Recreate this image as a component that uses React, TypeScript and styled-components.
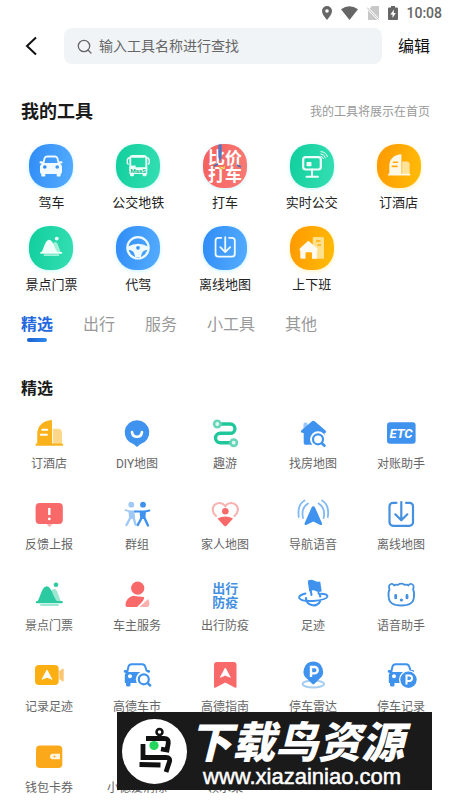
import React, { useState } from "react";
import styled, { createGlobalStyle } from "styled-components";

const GlobalStyle = createGlobalStyle`
  * { box-sizing: border-box; }
  body {
    margin: 0;
    background: #fff;
    color: #1a1a1a;
    font-family: Roboto, "Noto Sans CJK SC", sans-serif;
  }
  button, input { font: inherit; color: inherit; }
  button { border: 0; padding: 0; background: none; cursor: pointer; }
  svg { display: block; flex: none; }
`;

const Page = styled.div`
  position: relative;
  min-height: 100vh;
  overflow: hidden;
`;

const StatusBar = styled.div`
  display: flex;
  align-items: center;
  justify-content: flex-end;
  height: 28px;
  padding: 0 8px 3px 0;
  color: #666;
  font-size: 14px;
  font-weight: 500;
`;

const StatusIcons = styled.div`
  display: flex;
  align-items: center;
  gap: 9px;
  margin-right: 8px;
`;

const Header = styled.header`
  display: flex;
  align-items: center;
  height: 36px;
  padding: 0 20px;
`;

const BackButton = styled.button`
  display: flex;
  width: 44px;
  height: 36px;
  align-items: center;
  padding-left: 4px;
`;

const SearchBox = styled.label`
  display: flex;
  flex: 1;
  min-width: 0;
  height: 36px;
  align-items: center;
  gap: 7px;
  padding: 0 13px;
  border-radius: 8px;
  background: #f1f4f7;
  color: #555;
`;

const SearchInput = styled.input`
  flex: 1;
  min-width: 0;
  border: 0;
  padding: 0;
  outline: 0;
  background: transparent;
  font-size: 14px;
  &::placeholder { color: #666; opacity: 1; }
`;

const EditButton = styled.button`
  margin-left: 16px;
  padding-top: 1px;
  font-size: 16px;
  line-height: 24px;
  color: #111;
`;

const SectionHead = styled.div<{ $top: number; $bottom: number }>`
  display: flex;
  align-items: center;
  justify-content: space-between;
  padding: 0 20px 0 21px;
  margin: ${(p) => p.$top}px 0 ${(p) => p.$bottom}px;
`;

const Title = styled.h2<{ $size: number }>`
  margin: 0;
  font-size: ${(p) => p.$size}px;
  line-height: 24px;
  font-weight: 700;
`;

const Hint = styled.span`
  font-size: 12px;
  line-height: 16px;
  color: #999;
`;

const MyGrid = styled.div`
  display: grid;
  grid-template-columns: repeat(5, 1fr);
  row-gap: 14px;
  padding: 0 8px;
`;

const MyTool = styled.button`
  display: flex;
  flex-direction: column;
  align-items: center;
  gap: 6px;
  font-size: 13px;
  line-height: 18px;
  color: #222;
  white-space: nowrap;
`;

const tones = {
  blue: ["#2f8cf6", "#55adff", "#c5f1ff"],
  green: ["#10ce9d", "#35dfb3", "#c9f8f5"],
  orange: ["#ff9800", "#ffbd08", "#fff0b5"],
  red: ["#f5605c", "#f97b76", "#d5f1f8"],
};
type Tone = keyof typeof tones;

const Badge = styled.span<{ $tone: Tone }>`
  display: block;
  width: 44px;
  height: 44px;
  overflow: hidden;
  border-radius: 20px;
  background: linear-gradient(100deg, ${(p) => tones[p.$tone][0]}, ${(p) => tones[p.$tone][1]});
  box-shadow: 0 1px 4px ${(p) => tones[p.$tone][2]};
`;

const Tabs = styled.div`
  display: flex;
  gap: 30px;
  padding: 0 21px;
  margin-top: 19px;
`;

const Tab = styled.button<{ $active: boolean }>`
  display: flex;
  flex-direction: column;
  align-items: center;
  gap: 1px;
  height: 29px;
  font-size: 16px;
  line-height: 24px;
  font-weight: ${(p) => (p.$active ? 700 : 400)};
  color: ${(p) => (p.$active ? "#2468e0" : "#999")};
  &::after {
    content: "";
    width: 20px;
    height: 4px;
    border-radius: 2px;
    background: ${(p) => (p.$active ? "linear-gradient(90deg, #1c5fd0, #2f8cf0)" : "transparent")};
  }
`;

const ToolGrid = styled.div`
  display: grid;
  grid-template-columns: repeat(5, 1fr);
  row-gap: 28px;
  padding: 0 5px;
`;

const Tool = styled.button`
  display: flex;
  flex-direction: column;
  align-items: center;
  gap: 9px;
  font-size: 12px;
  line-height: 16px;
  color: #666;
  white-space: nowrap;
`;

const IconSlot = styled.span`
  display: block;
  width: 28px;
  height: 28px;
`;

const Banner = styled.aside`
  position: absolute;
  left: 26%;
  right: 18px;
  bottom: 10px;
  display: flex;
  align-items: center;
  gap: 2px;
  height: 78px;
  padding-left: 5px;
  background: #1a1a1a;
  color: #fff;
`;

const BannerText = styled.div`
  display: flex;
  flex-direction: column;
  padding-top: 8px;
`;

const BannerName = styled.strong`
  font-size: 43px;
  line-height: 44px;
  font-weight: 900;
  font-style: italic;
  white-space: nowrap;
`;

const BannerLink = styled.a`
  padding-left: 14px;
  color: #fff;
  font-family: "Liberation Sans", sans-serif;
  font-size: 22px;
  line-height: 24px;
  text-decoration: none;
  -webkit-text-stroke: 0.5px #fff;
`;

const CJK = '"Noto Sans CJK SC", sans-serif';
const BLUE = "#3f92ee";
const RED = "#f8696a";

/* Glyphs shared by both grids, drawn in a 28-unit square. */
const HotelGlyph = ({ main, side, mark }: { main: string; side: string; mark: string }) => (
  <g>
    <path d="M17.8 9.8H23a4 4 0 0 1 4 4V25h-9.2z" fill={side} />
    <path d="M2.2 25V15C2.2 7 8 1.6 17 1v24z" fill={main} />
    <rect x="0.7" y="24.6" width="27.3" height="2.2" rx="0.6" fill={main} />
    <path d="M7.2 10.7h5M5.8 15.7h6" stroke={mark} strokeWidth="2" strokeLinecap="round" />
  </g>
);

const SceneryGlyph = ({ main, side }: { main: string; side: string }) => (
  <g>
    <path d="M12 20.8L16 10q3.5-4 6 0l4 10.8z" fill={side} />
    <path d="M1.8 20.8C5 19 6 6 11.5 5.2 17 5 18 17 22.5 20.8z" fill={main} />
    <rect x="0.8" y="20" width="27" height="2.2" rx="1" fill={main} />
    <rect x="5" y="23" width="19" height="2" rx="1" fill={side} />
    <circle cx="21" cy="3.8" r="2.3" fill={main} />
  </g>
);

const DownloadGlyph = ({ color }: { color: string }) => (
  <path
    d="M9.5 2.8H6a3.5 3.5 0 0 0-3.5 3.5v16A3.5 3.5 0 0 0 6 25.8h16.5a3.5 3.5 0 0 0 3.5-3.5v-16a3.5 3.5 0 0 0-3.5-3.5H19M14.3 2v18M8.3 14.3l6 6 6-6"
    fill="none"
    stroke={color}
    strokeWidth="2.2"
    strokeLinecap="round"
    strokeLinejoin="round"
  />
);

const Inner = ({ children }: { children: React.ReactNode }) => (
  <g transform="translate(10.5 9.5) scale(0.82)">{children}</g>
);

const myIcons: Record<string, React.ReactNode> = {
  drive: (
    <g fill="#f0faff">
      <path d="M14.2 20l1.3-5.500q.5-2 2.500-2h8q2 0 2.500 2l1.300 5.500" fill="none" stroke="#f0faff" strokeWidth="1.8" />
      <path d="M13 19h18l2 3v6a2 2 0 0 1-2 2H13a2 2 0 0 1-2-2v-6z" />
      <rect x="10.5" y="17.2" width="3.5" height="2.2" rx="1" />
      <rect x="30" y="17.2" width="3.5" height="2.2" rx="1" />
      <rect x="12.3" y="28" width="4" height="4.6" rx="1.2" />
      <rect x="27.7" y="28" width="4" height="4.6" rx="1.2" />
      <circle cx="15.8" cy="23" r="1.8" fill="#2f8cf6" />
      <circle cx="28.2" cy="23" r="1.8" fill="#3f97fa" />
    </g>
  ),
  bus: (
    <g fill="#eafff8">
      <path d="M14.3 27V14.5q0-2.500 2.500-2.500h11q2.500 0 2.500 2.500V27" fill="none" stroke="#eafff8" strokeWidth="1.9" />
      <path d="M14 13.500q-2.700.5-2.700 3V19q0 1 1.300 1.200M30.500 13.500q2.700.5 2.700 3V19q0 1-1.300 1.200" fill="none" stroke="#eafff8" strokeWidth="1.4" />
      <rect x="16.3" y="11.2" width="12" height="2.6" />
      <path d="M13.4 23.500l2-2h4.200v1.800h11.600V30H13.400z" />
      <rect x="14" y="28" width="4" height="4.3" rx="1.2" />
      <rect x="26.600" y="28" width="4" height="4.3" rx="1.2" />
      <text x="22.3" y="28.5" fontSize="6" fontWeight="700" fontFamily="Roboto, sans-serif" textAnchor="middle" fill="#12b98c">MaaS</text>
    </g>
  ),
  taxi: (
    <g>
      <g fontFamily={CJK} fontWeight="700" fontSize="17" fill="#fff" textAnchor="middle">
        <text x="22" y="20">比价</text>
        <text x="22" y="37">打车</text>
      </g>
      <path d="M15.300 0h3.400v13l-1.700 5-1.700-5z" fill="#5078c4" />
      <path d="M16 23l3 2 3-3" stroke="#efb93c" strokeWidth="1.600" fill="none" />
      <path d="M34 21l4 2M11 22l4-2" stroke="#4175b7" strokeWidth="1.600" />
    </g>
  ),
  live: (
    <g fill="none" stroke="#effff9" strokeLinecap="round">
      <rect x="13.2" y="13.2" width="17.6" height="12.3" rx="2.5" strokeWidth="2.2" />
      <rect x="16.5" y="18" width="5" height="4.3" rx="0.8" fill="#effff9" stroke="none" />
      <path d="M22 25.500v6.500M16.500 32.800h11.500" strokeWidth="2" />
      <path d="M31 12.200q2 .5 2.300 2.300M30.800 9.800q4 .6 4.700 4.200M31 7.600q5.200.5 6.400 5" strokeWidth="1" />
    </g>
  ),
  hotel: <Inner><HotelGlyph main="#fff8e7" side="#ffe39a" mark="#ffa90a" /></Inner>,
  scenery: <Inner><SceneryGlyph main="#effff9" side="#a4f0d8" /></Inner>,
  wheel: (
    <g>
      <circle cx="22" cy="21.8" r="10.7" fill="none" stroke="#effaff" strokeWidth="2.2" />
      <path d="M12 20.500q10-5.500 20 0v3.300q-6.500 0-7 7.200h-6q-.5-7.200-7-7.200z" fill="#effaff" />
      <circle cx="22" cy="21.8" r="1.9" fill="#3f97fa" />
    </g>
  ),
  offline: <Inner><DownloadGlyph color="#effaff" /></Inner>,
  commute: (
    <g>
      <path d="M22.700 12.500q0-1.500 1.500-1.500h8.300q1.500 0 1.500 1.500v20.200H22.700z" fill="#ffe08c" />
      <path d="M26 15h4.500M27.500 19h3.500" stroke="#ffad0a" strokeWidth="1.4" />
      <path d="M18.300 14.700l8.600 7.300q1.500 1.500 0 3v6.300q0 1.500-1.500 1.500H22v-5.500q0-1-1-1h-4.500q-1 0-1 1v5.500h-3.700q-1.500 0-1.500-1.500V25q-1.600-1.500 0-3z" fill="#fffaf0" />
    </g>
  ),
};

const CarShape = () => (
  <g>
    <path d="M4 11l1.500-6.500q.7-2.300 3-2.300h10.700q2.300 0 3 2.300L24 10" fill="none" stroke={BLUE} strokeWidth="2" />
    <path d="M3 10h22l1.500 3v8H1.800v-8z" fill={BLUE} />
    <rect x="0.8" y="8" width="4" height="2.8" rx="1.2" fill={BLUE} />
    <rect x="23" y="8" width="4" height="2.8" rx="1.2" fill={BLUE} />
    <rect x="3" y="19" width="4.5" height="5.5" rx="1.5" fill={BLUE} />
    <circle cx="7" cy="14.3" r="2" fill="#fff" />
  </g>
);

const NavArrow = ({ x, y }: { x: number; y: number }) => (
  <path transform={`translate(${x} ${y})`} d="M0 0L5 9.300 0 7.300-5 9.300z" fill="#fff" stroke="#fff" strokeWidth="0.8" strokeLinejoin="round" />
);

const icons: Record<string, React.ReactNode> = {
  hotel: <HotelGlyph main="#f9b21c" side="#fdd88b" mark="#fff" />,
  diy: (
    <g>
      <path d="M14 1.200a12.200 12.200 0 0 1 3.200 24L14 28l-3.200-2.800A12.200 12.200 0 0 1 14 1.200z" fill={BLUE} />
      <path d="M9 13q.5 4.800 5 4.800t5-4.800" fill="none" stroke="#fff" strokeWidth="2.6" strokeLinecap="round" />
    </g>
  ),
  fun: (
    <g fill="none">
      <path d="M9.500 5h9.800a4.600 4.600 0 0 1 0 9.300H9.200a4.700 4.700 0 0 0 0 9.400h10" stroke="#20c79b" strokeWidth="3.4" />
      <circle cx="6.3" cy="5" r="3.2" fill="#e1faf3" stroke="#67d6b8" strokeWidth="2.6" />
      <circle cx="22.7" cy="23.7" r="3.2" fill="#e1faf3" stroke="#67d6b8" strokeWidth="2.6" />
    </g>
  ),
  house: (
    <g>
      <rect x="4.5" y="3.5" width="4" height="8" rx="1.5" fill="#9bc8f8" />
      <path d="M14.300 1.700q.8 0 1.700.8l10.500 9q1.500 2-1 2.500V24q0 1.800-1.800 1.800H6.500q-1.800 0-1.800-1.800V14q-4-.5-2.500-2.500l10.500-9q.8-.8 1.600-.8z" fill={BLUE} />
      <circle cx="19" cy="20.3" r="8" fill="#fff" />
      <circle cx="19" cy="20.3" r="5" fill="none" stroke={BLUE} strokeWidth="2.2" />
      <path d="M22.800 24.200l2.700 2.500" stroke={BLUE} strokeWidth="2.6" strokeLinecap="round" />
    </g>
  ),
  etc: (
    <g>
      <rect x="0" y="3.3" width="28.6" height="21.4" rx="3" fill={BLUE} />
      <text x="14" y="18.800" textAnchor="middle" fontFamily="Roboto, sans-serif" fontWeight="700" fontStyle="italic" fontSize="13" fill="#fff">ETC</text>
    </g>
  ),
  report: (
    <g>
      <path d="M11 23h7l-2.500 3.300q-1 1-2 0z" fill="#fbb0ad" />
      <rect x="0.6" y="3" width="27.2" height="21" rx="4" fill={RED} />
      <path d="M14.300 8v7" stroke="#fff" strokeWidth="2.4" />
      <circle cx="14.3" cy="18.9" r="1.4" fill="#fff" />
    </g>
  ),
  group: (
    <g fill="none" strokeLinejoin="round">
      <g stroke="#9fc9f4" fill="#9fc9f4">
        <circle cx="8.3" cy="4.7" r="2.9" stroke="none" />
        <path d="M2.500 10.200l5 1.300h5" strokeWidth="1.8" strokeLinecap="round" />
        <path d="M5.500 11h6l.5 7-1 1H7l-1-1z" stroke="none" />
        <path d="M7.500 17.500L3.500 25M10.500 17.500l2 7" strokeWidth="2.4" strokeLinecap="round" />
      </g>
      <g stroke={BLUE} fill={BLUE}>
        <circle cx="20" cy="4.7" r="2.9" stroke="none" />
        <path d="M12 11.500h10l4.500-1" strokeWidth="1.8" strokeLinecap="round" />
        <path d="M16.500 11h6.500l-.7 8h-5z" stroke="none" />
        <path d="M18.500 18l-3.700 7M21.500 18l3.500 7.500" strokeWidth="2.4" strokeLinecap="round" />
      </g>
    </g>
  ),
  family: (
    <g>
      <path d="M5 16C1 12.500 1 8 3.200 5.300 6.500 1.700 11.500 2.500 14.300 6c2.800-3.500 7.800-4.300 11-.7C27.700 8 27.500 12.500 23.500 16" fill="none" stroke="#f8b2b0" strokeWidth="2.1" strokeLinecap="round" />
      <circle cx="14.3" cy="11.2" r="3.3" fill={RED} />
      <path d="M6.500 18.500q7.800-4 15.600 0L15.800 25.600q-1.500 1.500-3 0z" fill={RED} />
    </g>
  ),
  voice: (
    <g fill="none" strokeLinecap="round">
      <path d="M14.300 6.200q1.200 0 1.700 1.200l7 15.800q.5 2.300-1.700 1.700l-7-3.400-7 3.400q-2.200.6-1.700-1.700l7-15.800q.5-1.200 1.700-1.200z" fill={BLUE} />
      <path d="M4 18Q1.800 8 9 3.500M24.600 18Q26.800 8 19.600 3.500" stroke="#81b9f2" strokeWidth="1.8" />
      <path d="M-.2 17Q-2 5 5.500.5M28.800 17Q30.600 5 23.100.5" stroke="#81b9f2" strokeWidth="1.8" />
    </g>
  ),
  offline: <DownloadGlyph color="#4590df" />,
  scenery: <SceneryGlyph main="#2bcaa0" side="#9ce7d1" />,
  owner: (
    <g>
      <circle cx="14.7" cy="7.2" r="6.6" fill={RED} />
      <path d="M10 14.700q5 1 11 1.300.5 2.500-1.500 4.500l-5.500 5.500H4.500q-2 0-2-2 0-7 7.500-9.300z" fill={RED} />
      <path d="M16.500 26l8.500-8q2 3 1.300 6-.3 2-2.300 2z" fill="#fbb0ad" />
    </g>
  ),
  safety: (
    <g fill="#4590df" fontFamily={CJK} fontWeight="700" fontSize="13" textAnchor="middle">
      <text x="14.300" y="11.500">出行</text>
      <text x="14.300" y="26">防疫</text>
    </g>
  ),
  footprint: (
    <g fill="none" stroke={BLUE} strokeLinecap="round">
      <path d="M7 17a7.500 7.500 0 0 0 14 3.500M21.300 15.500q-.3-2-1.800-3.500" strokeWidth="2.2" />
      <path d="M6.500 12.500Q-1 14.500.2 17q2 3.500 14 3 14-1.500 14.300-4.500 0-2.500-6.500-2.800" strokeWidth="1.9" />
      <path d="M10.500 2.500l2 11.500" strokeWidth="2" />
      <path d="M8.800-.3q3.500-2 6.700 0 3 1.800 5.700.7l1.500 9.800q-3 1.500-6-.2-3-1.500-6.500.5z" fill={BLUE} stroke="none" />
    </g>
  ),
  bear: (
    <g>
      <path d="M7.200 4.500Q6 2.500 4 3 1 4 2.500 8.500.8 11.500 1.800 17q.8 7.500 12.500 7.500T26.800 17q1-5.500-.7-8.500Q27.600 4 24.600 3q-2-.5-3.200 1.500-1.400-1.500-3.600-.6-3.500-2.500-7 0-2.200-.9-3.600.6z" fill="none" stroke="#4590df" strokeWidth="1.8" strokeLinejoin="round" />
      <path d="M8.700 14.300v2.600M20 14.300v2.600" stroke="#4590df" strokeWidth="2.8" strokeLinecap="round" />
      <circle cx="14.4" cy="19" r="1.6" fill="#4590df" />
    </g>
  ),
  video: (
    <g>
      <path d="M24.300 9l3.300-2.300q1.100-.5 1.100.7v11.200q0 1.200-1.100.7l-3.300-2.300z" fill="#fcc574" />
      <rect x="0" y="3" width="23.7" height="20" rx="4" fill="#fbaf13" />
      <NavArrow x={12} y={8} />
    </g>
  ),
  market: (
    <g>
      <CarShape />
      <circle cx="20.8" cy="17.3" r="8" fill="#fff" />
      <circle cx="20.8" cy="17.3" r="5" fill="#fff" stroke={BLUE} strokeWidth="2.2" />
      <path d="M24.700 21.200l2.500 2.300" stroke={BLUE} strokeWidth="2.5" strokeLinecap="round" />
    </g>
  ),
  guide: (
    <g>
      <path d="M3 3q0-3 3-3h16.500q3 0 3 3v21.500q0 2-1.800 1l-9.400-5-9.500 5Q3 26.500 3 24.500z" fill={RED} />
      <NavArrow x={14.3} y={6} />
    </g>
  ),
  radar: (
    <g>
      <ellipse cx="14.3" cy="22" rx="10.7" ry="3.5" fill="none" stroke="#a7cdef" strokeWidth="2" />
      <path d="M14.300-.4a9.800 9.800 0 0 1 5.700 17.700l-4.500 4.400q-1.200 1-2.400 0l-4.500-4.400A9.800 9.800 0 0 1 14.300-.4z" fill={BLUE} />
      <path d="M12 15V5h3.500a3.200 3.200 0 0 1 0 6.400H12" fill="none" stroke="#fff" strokeWidth="2.4" />
    </g>
  ),
  parking: (
    <g>
      <CarShape />
      <circle cx="21.5" cy="17.7" r="9.5" fill="#fff" />
      <circle cx="21.5" cy="17.7" r="8.2" fill={BLUE} />
      <path d="M19.500 22.500v-9h2.800a2.700 2.700 0 0 1 0 5.400h-2.800" fill="none" stroke="#fff" strokeWidth="2" />
    </g>
  ),
  wallet: (
    <g>
      <rect x="1" y="2.5" width="26.3" height="22.5" rx="4" fill="#fba91a" />
      <path d="M17.700 10.800H25v5.400h-7.300a2.700 2.700 0 0 1 0-5.400z" fill="#fff5df" />
      <circle cx="19.5" cy="13.5" r="1" fill="#fba91a" />
    </g>
  ),
};

const myTools: { name: string; icon: string; tone: Tone }[] = [
  { name: "驾车", icon: "drive", tone: "blue" },
  { name: "公交地铁", icon: "bus", tone: "green" },
  { name: "打车", icon: "taxi", tone: "red" },
  { name: "实时公交", icon: "live", tone: "green" },
  { name: "订酒店", icon: "hotel", tone: "orange" },
  { name: "景点门票", icon: "scenery", tone: "green" },
  { name: "代驾", icon: "wheel", tone: "blue" },
  { name: "离线地图", icon: "offline", tone: "blue" },
  { name: "上下班", icon: "commute", tone: "orange" },
];

const tools: [string, string][] = [
  ["订酒店", "hotel"], ["DIY地图", "diy"], ["趣游", "fun"], ["找房地图", "house"], ["对账助手", "etc"],
  ["反馈上报", "report"], ["群组", "group"], ["家人地图", "family"], ["导航语音", "voice"], ["离线地图", "offline"],
  ["景点门票", "scenery"], ["车主服务", "owner"], ["出行防疫", "safety"], ["足迹", "footprint"], ["语音助手", "bear"],
  ["记录足迹", "video"], ["高德车市", "market"], ["高德指南", "guide"], ["停车雷达", "radar"], ["停车记录", "parking"],
  ["钱包卡券", "wallet"], ["小德爱消除", ""], ["领水果", ""],
];

const tabs = ["精选", "出行", "服务", "小工具", "其他"];

export default function App() {
  const [active, setActive] = useState(tabs[0]);
  return (
    <>
      <GlobalStyle />
      <Page>
        <StatusBar>
          <StatusIcons>
            <svg width="10" height="14" viewBox="0 0 10 14">
              <path fillRule="evenodd" d="M5 0a5 5 0 0 1 5 5c0 3.500-5 9-5 9S0 8.500 0 5a5 5 0 0 1 5-5zm0 3.200a1.800 1.800 0 1 0 0 3.600 1.800 1.800 0 0 0 0-3.600z" fill="#666" />
            </svg>
            <svg width="17" height="14" viewBox="0 0 17 14">
              <path d="M0 3.300Q8.500-3 17 3.300L8.500 14z" fill="#666" />
            </svg>
            <svg width="12" height="14" viewBox="0 0 12 14">
              <path d="M5 0h7v14H1V4z" fill="#c8c8c8" />
              <path d="M0 1.500L12 14" stroke="#fff" strokeWidth="2.5" />
              <path d="M0 1.500L11.500 13.500" stroke="#bbb" strokeWidth="1" />
            </svg>
            <svg width="10" height="14" viewBox="0 0 10 14">
              <path d="M3 0h4v1.500h2q1 0 1 1V13q0 1-1 1H1q-1 0-1-1V2.500q0-1 1-1h2z" fill="#666" />
              <path d="M6 3.500L2.300 8.500h2.200V12l3.300-5H5.700z" fill="#fff" />
            </svg>
          </StatusIcons>
          <span>10:08</span>
        </StatusBar>
        <Header>
          <BackButton aria-label="返回">
            <svg width="14" height="20" viewBox="0 0 14 20">
              <path d="M12 1.500L3 10l9 8.500" fill="none" stroke="#111" strokeWidth="2" />
            </svg>
          </BackButton>
          <SearchBox>
            <svg width="15" height="15" viewBox="0 0 15 15" fill="none" stroke="#666" strokeWidth="1.3">
              <circle cx="7" cy="7" r="5.7" />
              <path d="M11 11l3 3" strokeLinecap="round" />
            </svg>
            <SearchInput type="text" placeholder="输入工具名称进行查找" aria-label="输入工具名称进行查找" />
          </SearchBox>
          <EditButton>编辑</EditButton>
        </Header>
        <main>
          <SectionHead $top={36} $bottom={20}>
            <Title $size={18}>我的工具</Title>
            <Hint>我的工具将展示在首页</Hint>
          </SectionHead>
          <MyGrid>
            {myTools.map((t) => (
              <MyTool key={t.name}>
                <Badge $tone={t.tone}>
                  <svg width="44" height="44" viewBox="0 0 44 44" aria-hidden="true">{myIcons[t.icon]}</svg>
                </Badge>
                {t.name}
              </MyTool>
            ))}
          </MyGrid>
          <Tabs role="tablist">
            {tabs.map((t) => (
              <Tab key={t} role="tab" aria-selected={t === active} $active={t === active} onClick={() => setActive(t)}>
                {t}
              </Tab>
            ))}
          </Tabs>
          <SectionHead $top={35} $bottom={18}>
            <Title $size={16}>精选</Title>
          </SectionHead>
          <ToolGrid>
            {tools.map(([name, icon]) => (
              <Tool key={name}>
                <IconSlot>
                  <svg width="28" height="28" viewBox="0 0 28 28" overflow="visible" aria-hidden="true">{icons[icon]}</svg>
                </IconSlot>
                {name}
              </Tool>
            ))}
          </ToolGrid>
        </main>
        <Banner>
          <svg width="65" height="65" viewBox="0 0 65 65" aria-hidden="true">
            <circle cx="32.5" cy="32.5" r="32.5" fill="#fff" />
            <g fill="none" stroke="#111" strokeWidth="4.8">
              <circle cx="37.5" cy="13" r="3" strokeWidth="2.5" />
              <path d="M24 19.500h18q5 0 4.300 4.500L45 31l-6-1" />
              <path d="M21 25v13.500h23q4.500 0 3.500 4L44 53" />
              <path d="M17.500 45.500l21 .5" />
            </g>
            <circle cx="32" cy="26.500" r="4.600" fill="#22d65c" />
          </svg>
          <BannerText>
            <BannerName>下载鸟资源</BannerName>
            <BannerLink href="#">www.xiazainiao.com</BannerLink>
          </BannerText>
        </Banner>
      </Page>
    </>
  );
}
